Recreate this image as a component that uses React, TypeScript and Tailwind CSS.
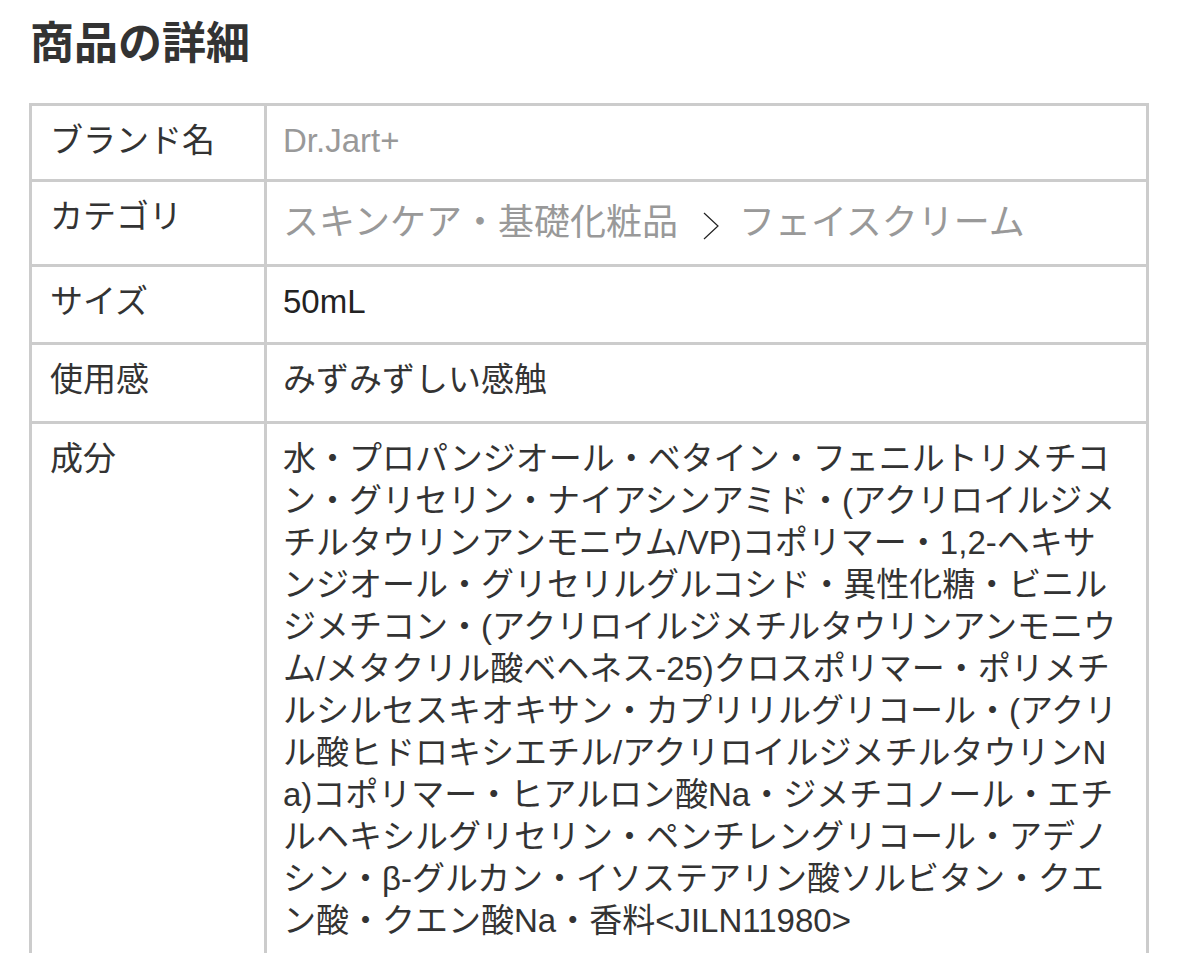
const font = '[font-family:"Liberation_Sans","Noto_Sans_CJK_JP",sans-serif]';

const ingredients = [
  '水・プロパンジオール・ベタイン・フェニルトリメチコ',
  'ン・グリセリン・ナイアシンアミド・(アクリロイルジメ',
  'チルタウリンアンモニウム/VP)コポリマー・1,2-ヘキサ',
  'ンジオール・グリセリルグルコシド・異性化糖・ビニル',
  'ジメチコン・(アクリロイルジメチルタウリンアンモニウ',
  'ム/メタクリル酸ベヘネス-25)クロスポリマー・ポリメチ',
  'ルシルセスキオキサン・カプリリルグリコール・(アクリ',
  'ル酸ヒドロキシエチル/アクリロイルジメチルタウリンN',
  'a)コポリマー・ヒアルロン酸Na・ジメチコノール・エチ',
  'ルヘキシルグリセリン・ペンチレングリコール・アデノ',
  'シン・β-グルカン・イソステアリン酸ソルビタン・クエ',
  'ン酸・クエン酸Na・香料<JILN11980>',
];

const Chevron = () => (
  <svg className="inline-block ml-6 mr-[19px] align-[-5px]" width="18" height="28" viewBox="0 0 18 28" fill="none">
    <polyline points="2,1 16,14 2,27" stroke="#222" strokeWidth="1.2" />
  </svg>
);

const Label = ({ children, pb }: { children: React.ReactNode; pb: string }) => (
  <div className={`border-r-[3px] border-b-[3px] border-[#cccccc] pl-[18px] pt-[14px] ${pb} text-[33px] leading-[42px] text-[#333333]`}>
    {children}
  </div>
);

export default function App() {
  return (
    <div className={`min-h-[953px] bg-white pl-[29px] pr-[30px] pt-[22px] ${font}`}>
      <h2 className="pl-px text-[44px] font-bold leading-none text-[#333333] mb-[37px]">商品の詳細</h2>

      <div className="grid grid-cols-[235px_1fr] border-l-[3px] border-t-[3px] border-[#cccccc]">
        {/* brand */}
        <Label pb="pb-[17px]">ブランド名</Label>
        <div className="border-r-[3px] border-b-[3px] border-[#cccccc] pl-4 pt-[14px] pb-[17px] text-[33px] leading-[42px] text-[#999999]">
          Dr.Jart+
        </div>

        {/* category */}
        <Label pb="pb-[26px]">カテゴリ</Label>
        <div className="border-r-[3px] border-b-[3px] border-[#cccccc] pl-4 pt-4 pb-4 text-[36px] leading-[50px] text-[#999999] whitespace-nowrap">
          スキンケア・基礎化粧品
          <Chevron />
          フェイスクリーム
        </div>

        {/* size */}
        <Label pb="pb-[19px]">サイズ</Label>
        <div className="border-r-[3px] border-b-[3px] border-[#cccccc] pl-4 pt-[14px] pb-[19px] text-[33px] leading-[42px] text-[#222222]">
          50mL
        </div>

        {/* feel */}
        <Label pb="pb-5">使用感</Label>
        <div className="border-r-[3px] border-b-[3px] border-[#cccccc] pl-4 pt-[14px] pb-5 text-[33px] leading-[42px] text-[#333333]">
          みずみずしい感触
        </div>

        {/* ingredients */}
        <Label pb="pb-[19px]">成分</Label>
        <div className="border-r-[3px] border-b-[3px] border-[#cccccc] pl-4 pt-[14px] pb-[19px] text-[33px] leading-[42px] text-[#333333]">
          {ingredients.map((line) => (
            <div key={line} className="whitespace-nowrap">
              {line}
            </div>
          ))}
        </div>
      </div>
    </div>
  );
}
